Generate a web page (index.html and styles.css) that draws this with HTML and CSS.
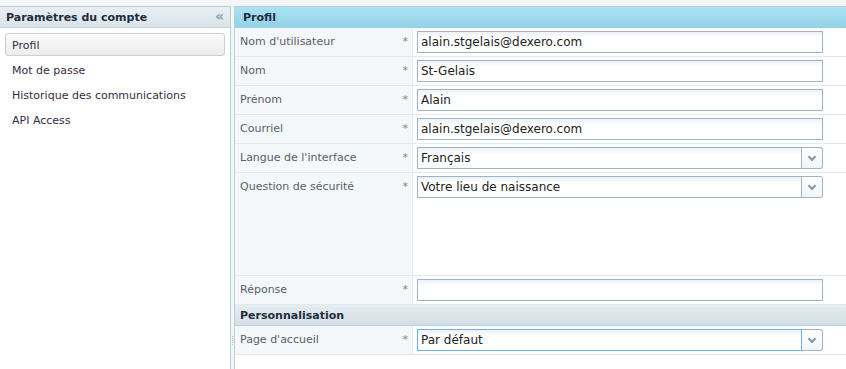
FILE: index.html
```html
<!DOCTYPE html>
<html lang="fr">
<head>
  <meta charset="UTF-8" />
  <title>Paramètres du compte</title>
  <link rel="stylesheet" href="styles.css">
</head>
<body>
  <div class="app">
    <div class="sidebar">
      <div class="sidebar-header">
        <span>Paramètres du compte</span>
        <span class="collapse">&laquo;</span>
      </div>
      <ul class="menu">
        <li class="active">Profil</li>
        <li>Mot de passe</li>
        <li>Historique des communications</li>
        <li>API Access</li>
      </ul>
    </div>

    <div class="splitter"><span class="grip"></span></div>

    <div class="main">
      <div class="panel-header">Profil</div>

      <div class="row">
        <div class="label">Nom d'utilisateur<span class="req">*</span></div>
        <div class="field"><div class="input">alain.stgelais@dexero.com</div></div>
      </div>
      <div class="row">
        <div class="label">Nom<span class="req">*</span></div>
        <div class="field"><div class="input">St-Gelais</div></div>
      </div>
      <div class="row">
        <div class="label">Prénom<span class="req">*</span></div>
        <div class="field"><div class="input">Alain</div></div>
      </div>
      <div class="row">
        <div class="label">Courriel<span class="req">*</span></div>
        <div class="field"><div class="input">alain.stgelais@dexero.com</div></div>
      </div>
      <div class="row">
        <div class="label">Langue de l'interface<span class="req">*</span></div>
        <div class="field">
          <div class="combo">
            <div class="input">Français</div>
            <div class="trigger"><span class="chev"></span></div>
          </div>
        </div>
      </div>
      <div class="row tall">
        <div class="label">Question de sécurité<span class="req">*</span></div>
        <div class="field">
          <div class="combo">
            <div class="input">Votre lieu de naissance</div>
            <div class="trigger"><span class="chev"></span></div>
          </div>
        </div>
      </div>
      <div class="row">
        <div class="label">Réponse<span class="req">*</span></div>
        <div class="field"><div class="input"></div></div>
      </div>

      <div class="section-header">Personnalisation</div>

      <div class="row">
        <div class="label">Page d'accueil<span class="req">*</span></div>
        <div class="field">
          <div class="combo focus">
            <div class="input">Par défaut</div>
            <div class="trigger"><span class="chev"></span></div>
          </div>
        </div>
      </div>
    </div>
  </div>
</body>
</html>
```

FILE: styles.css
```css
body {
  margin: 0;
  font-family: 'DejaVu Sans', Verdana, sans-serif;
  font-size: 11px;
  background: #f4f5f7;
  color: #333;
}

.app {
  display: flex;
  height: 369px;
  padding-top: 6px;
  box-sizing: border-box;
}

.sidebar {
  width: 230px;
  background: #fff;
  border-top: 1px solid #b9d0db;
  border-right: 1px solid #b9d0db;
}

.sidebar-header {
  height: 21px;
  display: flex;
  align-items: center;
  justify-content: space-between;
  padding: 0 6px;
  box-sizing: border-box;
  background: linear-gradient(#e9eff2, #d9e4e9);
  border-bottom: 1px solid #c3d5de;
  font-weight: bold;
  font-size: 11px;
  color: #1f2d3d;
}

.collapse {
  color: #8aa0ae;
  font-size: 14px;
  font-weight: bold;
  line-height: 1;
  margin-top: -3px;
}

.menu {
  list-style: none;
  margin: 0;
  padding: 5px 5px 0;
}

.menu li {
  height: 21px;
  line-height: 23px;
  padding-left: 6px;
  margin-bottom: 2px;
  color: #352c44;
  border: 1px solid transparent;
}

.menu li.active {
  border: 1px solid #cfcfd2;
  border-radius: 3px;
  background: linear-gradient(#fbfbfb, #ececee);
}

.splitter {
  width: 3px;
  position: relative;
}

.grip {
  position: absolute;
  left: 1px;
  top: 330px;
  width: 1px;
  height: 10px;
  background: repeating-linear-gradient(#b5c3cc 0 1px, transparent 1px 2px);
}

.main {
  flex: 1;
  background: #fff;
  border-top: 1px solid #b9d0db;
  border-left: 1px solid #b9d0db;
}

.panel-header {
  height: 21px;
  line-height: 21px;
  padding-left: 8px;
  background: linear-gradient(#a9e2f4, #93d1e6);
  font-weight: bold;
  color: #1f2d3d;
}

.row {
  display: flex;
  height: 28px;
  border-bottom: 1px solid #dfe9ee;
}

.row.tall {
  height: 102px;
}

.label {
  width: 178px;
  display: flex;
  justify-content: space-between;
  padding: 7px 4px 0 5px;
  box-sizing: border-box;
  background: #f5f8fa;
  border-right: 1px solid #e6eef2;
  color: #56606a;
  line-height: 14px;
}

.req {
  color: #7c858d;
}

.field {
  padding: 3px 0 0 4px;
}

.input {
  width: 406px;
  height: 22px;
  box-sizing: border-box;
  border: 1px solid #9db5c8;
  background: linear-gradient(#eef1f8, #fff 6px);
  padding: 0 3px;
  line-height: 21px;
  font-size: 12px;
  color: #222;
}

.combo {
  display: flex;
  width: 406px;
}

.combo .input {
  width: 385px;
}

.trigger {
  width: 21px;
  height: 22px;
  box-sizing: border-box;
  border: 1px solid #9db5c8;
  border-left: none;
  border-radius: 0 3px 3px 0;
  background: linear-gradient(#fff, #f1f4f6);
  display: flex;
  align-items: center;
  justify-content: center;
}

.combo.focus .input {
  border-color: #6cb1e8;
}

.chev {
  width: 4px;
  height: 4px;
  border-right: 2px solid #8597a6;
  border-bottom: 2px solid #8597a6;
  transform: rotate(45deg);
  margin-top: -3px;
}

.section-header {
  height: 19px;
  line-height: 19px;
  padding-left: 5px;
  background: linear-gradient(#e3ecf0, #d2dfe5);
  border-top: 1px solid #e6eef2;
  border-bottom: 1px solid #bcd0da;
  font-weight: bold;
  color: #1f2d3d;
}
```
